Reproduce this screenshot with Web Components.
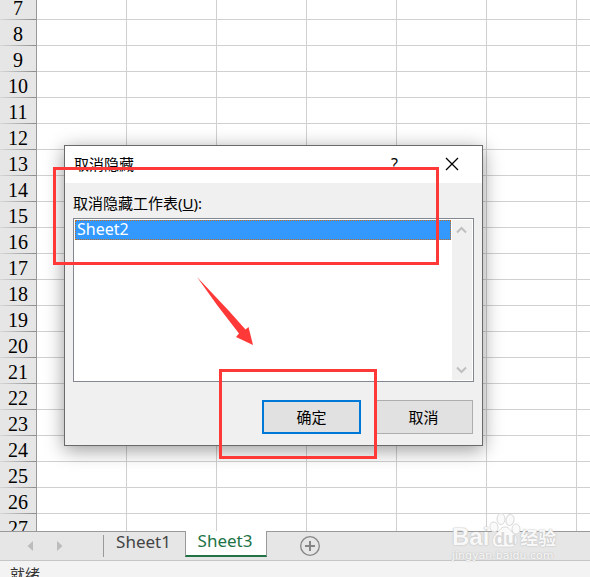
<!DOCTYPE html>
<html lang="zh-CN">
<head>
<meta charset="utf-8">
<title>取消隐藏工作表</title>
<style>
    body {
        margin: 0;
        overflow: hidden;
        font-family: "Noto Sans", "Noto Sans CJK SC", sans-serif;
        color: #000;
    }
</style>
</head>
<body>
<excel-app>
    <sheet-grid first="7" last="27"></sheet-grid>
    <sheet-tabs>
        <sheet-tab>Sheet1</sheet-tab>
        <sheet-tab active>Sheet3</sheet-tab>
    </sheet-tabs>
    <status-bar>就绪</status-bar>
    <unhide-dialog slot="overlay"></unhide-dialog>
    <mark-box slot="overlay" class="list-mark"></mark-box>
    <mark-box slot="overlay" class="ok-mark"></mark-box>
    <mark-arrow slot="overlay"></mark-arrow>
    <site-watermark slot="overlay"></site-watermark>
</excel-app>

<script>
class ExcelApp extends HTMLElement {
    constructor() {
        super();
        this.attachShadow({ mode: 'open' });
        this.shadowRoot.innerHTML = `
            <style>
                :host {
                    display: flex;
                    flex-direction: column;
                    position: relative;
                    height: 100vh;
                    overflow: hidden;
                    background: #fff;
                }
                ::slotted([slot="overlay"]) { position: absolute; }
                ::slotted(unhide-dialog) { left: 64px; top: 145px; }
                ::slotted(.list-mark) { left: 53px; top: 167px; width: 386px; height: 98px; }
                ::slotted(.ok-mark) { left: 219px; top: 369px; width: 158px; height: 90px; }
                ::slotted(mark-arrow) { left: 196px; top: 276px; }
                ::slotted(site-watermark) { right: 32px; bottom: 14px; }
            </style>
            <slot></slot>
            <slot name="overlay"></slot>
        `;
    }
}

class SheetGrid extends HTMLElement {
    constructor() {
        super();
        this.attachShadow({ mode: 'open' });
    }
    connectedCallback() {
        const first = Number(this.getAttribute('first'));
        const last = Number(this.getAttribute('last'));
        const cells = '<td></td>'.repeat(7);
        let rows = '';
        for (let n = first; n <= last; n++) {
            rows += `<tr><th scope="row">${n}</th>${cells}</tr>`;
        }
        this.shadowRoot.innerHTML = `
            <style>
                :host {
                    display: block;
                    flex: 1;
                    min-height: 0;
                    overflow: hidden;
                }
                table {
                    margin-top: -6px;
                    width: 667px;
                    table-layout: fixed;
                    border-collapse: separate;
                    border-spacing: 0;
                }
                th, td {
                    box-sizing: border-box;
                    height: 26px;
                    padding: 0;
                    border-right: 1px solid #d0d0d0;
                    border-bottom: 1px solid #d0d0d0;
                }
                th {
                    width: 37px;
                    padding-top: 2px;
                    border-right-color: #999;
                    border-bottom: 0;
                    background: linear-gradient(to right, #d8d8d8, #8c8c8c) bottom / 100% 1px no-repeat #e6e6e6;
                    font: 20px/24px "Liberation Serif", serif;
                }
            </style>
            <table><tbody>${rows}</tbody></table>
        `;
    }
}

class SheetTabs extends HTMLElement {
    constructor() {
        super();
        this.attachShadow({ mode: 'open' });
        this.shadowRoot.innerHTML = `
            <style>
                :host {
                    display: flex;
                    height: 30px;
                    box-sizing: border-box;
                    background: linear-gradient(#999, #999) top / 100% 1px no-repeat #e6e6e6;
                    border-bottom: 1px solid #c6c6c6;
                }
                nav {
                    display: flex;
                    align-items: center;
                    gap: 12px;
                    width: 81px;
                    padding-left: 22px;
                }
                button {
                    display: block;
                    padding: 0;
                    border: 0;
                    background: none;
                }
                svg { display: block; }
                .line {
                    width: 1px;
                    margin: 4px 0 3px;
                    background: #999;
                }
                .add { margin-left: 32px; }
            </style>
            <nav>
                <button aria-label="上一个"><svg width="17" height="12"><path d="M11 1v10L5.500 6z" fill="#bcbcbc"/></svg></button>
                <button aria-label="下一个"><svg width="17" height="12"><path d="M6 1v10l5.500-5z" fill="#bcbcbc"/></svg></button>
            </nav>
            <span class="line"></span>
            <slot></slot>
            <button class="add" aria-label="新工作表">
                <svg width="22" height="22" fill="none" stroke="#858585">
                    <circle cx="11" cy="11" r="9.300" stroke-width="1.300"/>
                    <path d="M11 6v10M6 11h10" stroke-width="2"/>
                </svg>
            </button>
        `;
    }
}

class SheetTab extends HTMLElement {
    constructor() {
        super();
        this.attachShadow({ mode: 'open' });
        this.shadowRoot.innerHTML = `
            <style>
                :host {
                    display: block;
                    width: 81px;
                }
                button {
                    display: block;
                    box-sizing: border-box;
                    width: 100%;
                    height: 26px;
                    padding: 0 2px 4px 0;
                    border: 0;
                    background: none;
                    color: #444;
                    font: 17px/20px "Noto Sans", sans-serif;
                }
                :host([active]) { width: 82px; }
                :host([active]) button {
                    background: #fff;
                    border: solid #999;
                    border-width: 0 1px;
                    border-bottom: 2px solid #217346;
                    color: #217346;
                }
            </style>
            <button><slot></slot></button>
        `;
    }
}

class StatusBar extends HTMLElement {
    constructor() {
        super();
        this.attachShadow({ mode: 'open' });
        this.shadowRoot.innerHTML = `
            <style>
                :host {
                    display: block;
                    height: 16px;
                    padding-left: 10px;
                    overflow: hidden;
                    background: #f3f3f3;
                    color: #333;
                    font-size: 15px;
                    line-height: 26px;
                }
            </style>
            <slot></slot>
        `;
    }
}

class UnhideDialog extends HTMLElement {
    constructor() {
        super();
        this.attachShadow({ mode: 'open' });
        this.shadowRoot.innerHTML = `
            <style>
                :host {
                    display: block;
                    box-sizing: border-box;
                    width: 419px;
                    border: 1px solid #6a6a6a;
                    background: #f0f0f0;
                    box-shadow: 0 4px 18px rgba(0, 0, 0, 0.4);
                    font-size: 15px;
                }
                header {
                    display: flex;
                    align-items: center;
                    box-sizing: border-box;
                    height: 37px;
                    padding: 0 2px 2px 9px;
                    background: #fff;
                }
                h1 {
                    flex: 1;
                    margin: 0;
                    font-size: 15px;
                    font-weight: normal;
                }
                button { font: inherit; color: inherit; }
                header button {
                    display: flex;
                    justify-content: center;
                    align-items: center;
                    width: 57px;
                    height: 34px;
                    padding: 0;
                    border: 0;
                    background: none;
                }
                header .help { font-size: 16px; }
                form { padding: 5px 8px 11px; }
                label {
                    display: block;
                    line-height: 30px;
                }
                .list {
                    display: flex;
                    box-sizing: border-box;
                    height: 164px;
                    padding: 1px;
                    border: 1px solid #828790;
                    background: #fff;
                }
                select {
                    flex: 1;
                    min-width: 0;
                    margin-right: 1px;
                    padding: 0;
                    border: 0;
                    border-radius: 0;
                    outline: 0;
                    overflow: hidden;
                    background: #fff;
                    font: 16px/20px "Noto Sans", sans-serif;
                }
                option {
                    display: flex;
                    align-items: center;
                    box-sizing: border-box;
                    height: 20px;
                    min-height: 20px;
                    padding: 0 1px 2px;
                    border: 1px dotted #c46a1c;
                    line-height: 16px;
                }
                option:checked {
                    background: linear-gradient(#39f, #39f);
                    -webkit-text-fill-color: #fff;
                }
                .scroll {
                    display: flex;
                    flex-direction: column;
                    justify-content: space-between;
                    width: 20px;
                    background: #f0f0f0;
                }
                .scroll button {
                    padding: 0;
                    border: 0;
                    background: none;
                }
                svg { display: block; }
                footer {
                    display: flex;
                    justify-content: flex-end;
                    gap: 13px;
                    padding: 18px 1px 0 0;
                }
                footer button {
                    box-sizing: border-box;
                    width: 99px;
                    height: 34px;
                    padding: 0 0 2px;
                    border: 1px solid #adadad;
                    background: #e1e1e1;
                }
                footer .ok { border: 2px solid #0078d7; }
            </style>
            <header>
                <h1>取消隐藏</h1>
                <button class="help" aria-label="帮助">?</button>
                <button aria-label="关闭">
                    <svg width="14" height="14"><path d="M1 1l12 12M13 1L1 13" stroke="#000" stroke-width="1.300"/></svg>
                </button>
            </header>
            <form onsubmit="return false">
                <label for="sheets">取消隐藏工作表(<u>U</u>):</label>
                <div class="list">
                    <select id="sheets" size="8">
                        <option selected>Sheet2</option>
                    </select>
                    <div class="scroll">
                        <button type="button" aria-label="向上"><svg width="20" height="20"><path d="M5 12.500l4.500-4.500 4.500 4.500" fill="none" stroke="#bfbfbf" stroke-width="2"/></svg></button>
                        <button type="button" aria-label="向下"><svg width="20" height="20"><path d="M5 7.500l4.500 4.500 4.500-4.500" fill="none" stroke="#bfbfbf" stroke-width="2"/></svg></button>
                    </div>
                </div>
                <footer>
                    <button class="ok">确定</button>
                    <button type="button">取消</button>
                </footer>
            </form>
        `;
    }
}

class MarkBox extends HTMLElement {
    constructor() {
        super();
        this.attachShadow({ mode: 'open' });
        this.shadowRoot.innerHTML = `
            <style>
                :host {
                    display: block;
                    box-sizing: border-box;
                    border: 3px solid #ff3838;
                    pointer-events: none;
                }
            </style>
        `;
    }
}

class MarkArrow extends HTMLElement {
    constructor() {
        super();
        this.attachShadow({ mode: 'open' });
        this.shadowRoot.innerHTML = `
            <style>
                :host { display: block; pointer-events: none; }
                svg { display: block; }
            </style>
            <svg width="58" height="70">
                <path d="M1 1L21 29 43 57.500l-3 3.500 17 8-4.500-18-3 2.500L33 35z" fill="#ff3838"/>
            </svg>
        `;
    }
}

class SiteWatermark extends HTMLElement {
    constructor() {
        super();
        this.attachShadow({ mode: 'open' });
        this.shadowRoot.innerHTML = `
            <style>
                :host {
                    display: block;
                    width: 106px;
                    color: #f8f8f8;
                    pointer-events: none;
                    text-shadow: 0 0 2px #bbb, 0 0 1px #ccc;
                }
                .logo {
                    display: flex;
                    align-items: flex-end;
                    height: 36px;
                    font: bold 24px/24px "Liberation Sans", sans-serif;
                }
                .paw {
                    display: grid;
                    width: 31px;
                    justify-items: center;
                    align-items: end;
                }
                .paw > * { grid-area: 1 / 1; }
                .paw span { color: #d9d9d9; font-size: 18px; line-height: 19px; text-shadow: none; }
                .cn { font: bold 18px/24px "Noto Sans CJK SC", sans-serif; }
                .url { font: 11px/14px "DejaVu Sans", sans-serif; }
                svg { display: block; }
            </style>
            <div class="logo">
                <span>Bai</span>
                <div class="paw">
                    <svg width="32" height="38" fill="#fafafa" stroke="#dadada">
                        <ellipse cx="5" cy="16" rx="4" ry="5" transform="rotate(-12 5 16)"/>
                        <ellipse cx="12" cy="8" rx="4" ry="5.500"/>
                        <ellipse cx="21" cy="9" rx="4" ry="5.500" transform="rotate(12 21 9)"/>
                        <ellipse cx="27" cy="18" rx="4" ry="5"/>
                        <path d="M16 16c5 0 6 5 10 8 4 4 2 11-3 12H8c-5-1-6-8-2-12 4-3 5-8 10-8z"/>
                    </svg>
                    <span>du</span>
                </div>
                <span class="cn">经验</span>
            </div>
            <div class="url">jingyan.baidu.com</div>
        `;
    }
}

customElements.define('excel-app', ExcelApp);
customElements.define('sheet-grid', SheetGrid);
customElements.define('sheet-tabs', SheetTabs);
customElements.define('sheet-tab', SheetTab);
customElements.define('status-bar', StatusBar);
customElements.define('unhide-dialog', UnhideDialog);
customElements.define('mark-box', MarkBox);
customElements.define('mark-arrow', MarkArrow);
customElements.define('site-watermark', SiteWatermark);
</script>
</body>
</html>
